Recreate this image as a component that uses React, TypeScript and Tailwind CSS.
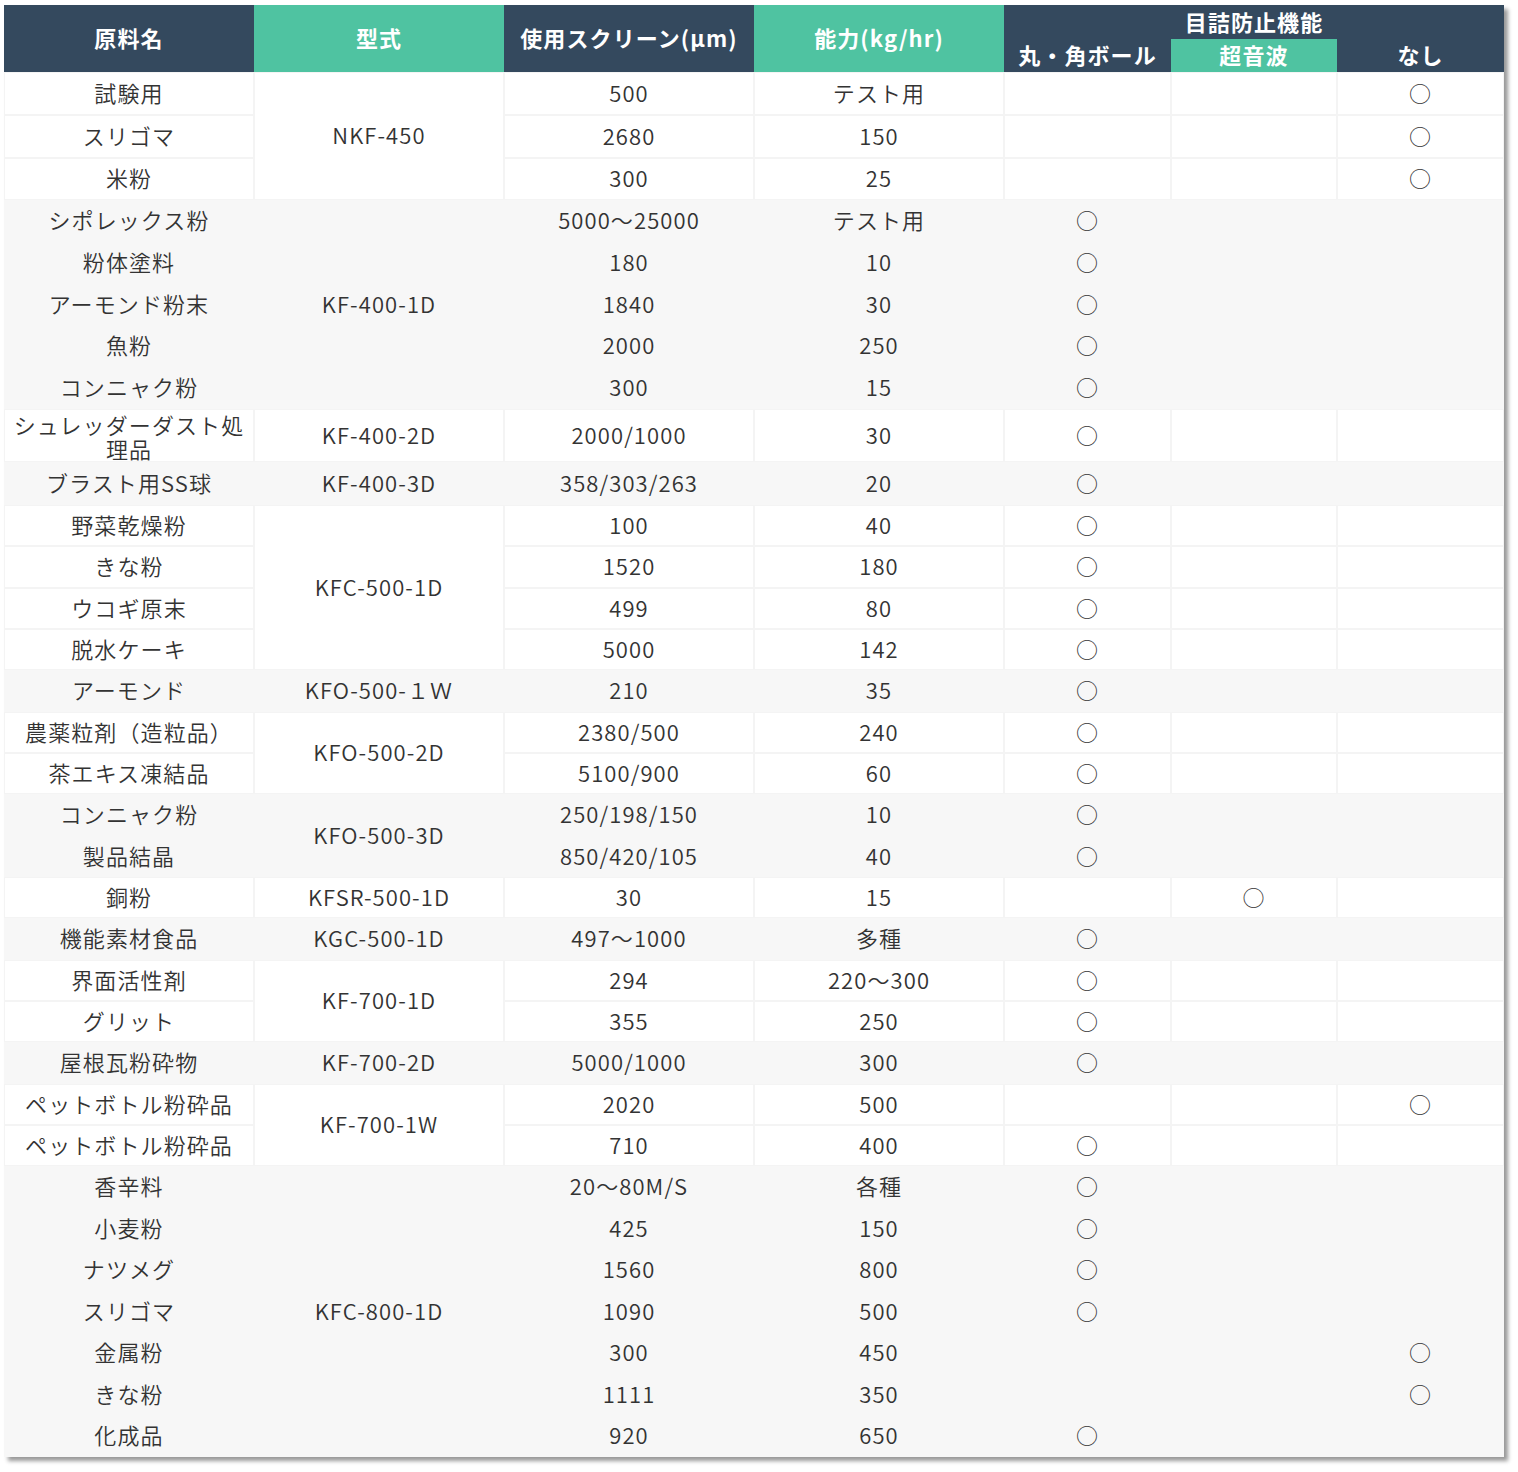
import React from "react";

// 目詰防止機能: 1 = 丸・角ボール, 2 = 超音波, 3 = なし
type Row = { name: string; screen: string; cap: string; mark: 1 | 2 | 3; h: number };
type Group = { model: string; grey: boolean; rows: Row[] };

const groups: Group[] = [
  {
    model: "NKF-450",
    grey: false,
    rows: [
      { name: "試験用", screen: "500", cap: "テスト用", mark: 3, h: 43 },
      { name: "スリゴマ", screen: "2680", cap: "150", mark: 3, h: 43 },
      { name: "米粉", screen: "300", cap: "25", mark: 3, h: 42 },
    ],
  },
  {
    model: "KF-400-1D",
    grey: true,
    rows: [
      { name: "シポレックス粉", screen: "5000～25000", cap: "テスト用", mark: 1, h: 42 },
      { name: "粉体塗料", screen: "180", cap: "10", mark: 1, h: 42 },
      { name: "アーモンド粉末", screen: "1840", cap: "30", mark: 1, h: 41 },
      { name: "魚粉", screen: "2000", cap: "250", mark: 1, h: 42 },
      { name: "コンニャク粉", screen: "300", cap: "15", mark: 1, h: 42 },
    ],
  },
  {
    model: "KF-400-2D",
    grey: false,
    rows: [{ name: "シュレッダーダスト処理品", screen: "2000/1000", cap: "30", mark: 1, h: 53 }],
  },
  {
    model: "KF-400-3D",
    grey: true,
    rows: [{ name: "ブラスト用SS球", screen: "358/303/263", cap: "20", mark: 1, h: 43 }],
  },
  {
    model: "KFC-500-1D",
    grey: false,
    rows: [
      { name: "野菜乾燥粉", screen: "100", cap: "40", mark: 1, h: 41 },
      { name: "きな粉", screen: "1520", cap: "180", mark: 1, h: 42 },
      { name: "ウコギ原末", screen: "499", cap: "80", mark: 1, h: 41 },
      { name: "脱水ケーキ", screen: "5000", cap: "142", mark: 1, h: 41 },
    ],
  },
  {
    model: "KFO-500-１Ｗ",
    grey: true,
    rows: [{ name: "アーモンド", screen: "210", cap: "35", mark: 1, h: 42 }],
  },
  {
    model: "KFO-500-2D",
    grey: false,
    rows: [
      { name: "農薬粒剤（造粒品）", screen: "2380/500", cap: "240", mark: 1, h: 41 },
      { name: "茶エキス凍結品", screen: "5100/900", cap: "60", mark: 1, h: 41 },
    ],
  },
  {
    model: "KFO-500-3D",
    grey: true,
    rows: [
      { name: "コンニャク粉", screen: "250/198/150", cap: "10", mark: 1, h: 42 },
      { name: "製品結晶", screen: "850/420/105", cap: "40", mark: 1, h: 41 },
    ],
  },
  {
    model: "KFSR-500-1D",
    grey: false,
    rows: [{ name: "銅粉", screen: "30", cap: "15", mark: 2, h: 41 }],
  },
  {
    model: "KGC-500-1D",
    grey: true,
    rows: [{ name: "機能素材食品", screen: "497～1000", cap: "多種", mark: 1, h: 42 }],
  },
  {
    model: "KF-700-1D",
    grey: false,
    rows: [
      { name: "界面活性剤", screen: "294", cap: "220～300", mark: 1, h: 41 },
      { name: "グリット", screen: "355", cap: "250", mark: 1, h: 41 },
    ],
  },
  {
    model: "KF-700-2D",
    grey: true,
    rows: [{ name: "屋根瓦粉砕物", screen: "5000/1000", cap: "300", mark: 1, h: 42 }],
  },
  {
    model: "KF-700-1W",
    grey: false,
    rows: [
      { name: "ペットボトル粉砕品", screen: "2020", cap: "500", mark: 3, h: 41 },
      { name: "ペットボトル粉砕品", screen: "710", cap: "400", mark: 1, h: 41 },
    ],
  },
  {
    model: "KFC-800-1D",
    grey: true,
    rows: [
      { name: "香辛料", screen: "20～80M/S", cap: "各種", mark: 1, h: 42 },
      { name: "小麦粉", screen: "425", cap: "150", mark: 1, h: 41 },
      { name: "ナツメグ", screen: "1560", cap: "800", mark: 1, h: 42 },
      { name: "スリゴマ", screen: "1090", cap: "500", mark: 1, h: 41 },
      { name: "金属粉", screen: "300", cap: "450", mark: 3, h: 42 },
      { name: "きな粉", screen: "1111", cap: "350", mark: 3, h: 41 },
      { name: "化成品", screen: "920", cap: "650", mark: 1, h: 42 },
    ],
  },
];

const heights: Record<number, string> = {
  41: "h-[41px]",
  42: "h-[42px]",
  43: "h-[43px]",
  53: "h-[53px]",
};

const spans: Record<number, string> = {
  1: "row-span-1",
  2: "row-span-2",
  3: "row-span-3",
  4: "row-span-4",
  5: "row-span-5",
  7: "row-span-7",
};

const cols = "grid grid-cols-[250px_250px_250px_250px_167px_166px_167px]";

const Cell = ({
  grey,
  tight,
  className,
  children,
}: {
  grey: boolean;
  tight?: boolean;
  className?: string;
  children?: React.ReactNode;
}) => (
  <div
    className={`flex items-center justify-center overflow-hidden border px-2 text-center ${
      tight ? "leading-[24px]" : "pb-[3px]"
    } ${grey ? "border-[#f7f7f7] bg-[#f7f7f7]" : "border-[#f4f4f4] bg-white"} ${className ?? ""}`}
  >
    {children}
  </div>
);

const App: React.FC = () => {
  return (
    <div className="min-h-screen bg-white pl-[4px] pt-[5px] font-['Noto_Sans_CJK_JP','Noto_Sans',sans-serif] text-[22px] tracking-[0.05em] text-[#333]">
      <div className="w-[1500px] shadow-[4px_4px_4px_rgba(0,0,0,0.4)]">
        {/* header */}
        <div className={`${cols} grid-rows-[34px_33px] font-bold text-white`}>
          <div className="row-span-2 flex items-center justify-center bg-[#34495e] pb-[2px]">原料名</div>
          <div className="row-span-2 flex items-center justify-center bg-[#4fc3a1] pb-[2px]">型式</div>
          <div className="row-span-2 flex items-center justify-center bg-[#34495e] pb-[2px]">使用スクリーン(μm)</div>
          <div className="row-span-2 flex items-center justify-center bg-[#4fc3a1] pb-[2px]">能力(kg/hr)</div>
          <div className="col-span-3 flex items-center justify-center bg-[#34495e] pb-[2px]">目詰防止機能</div>
          <div className="flex items-center justify-center bg-[#34495e] pb-[3px]">丸・角ボール</div>
          <div className="flex items-center justify-center bg-[#4fc3a1] pb-[3px]">超音波</div>
          <div className="flex items-center justify-center bg-[#34495e] pb-[3px]">なし</div>
        </div>

        {/* body */}
        <div className={`${cols} font-[350]`}>
          {groups.map((g, gi) =>
            g.rows.map((r, ri) => {
              const h = heights[r.h];
              return (
                <React.Fragment key={`${gi}-${ri}`}>
                  <Cell grey={g.grey} tight={r.h > 50} className={h}>
                    {r.name}
                  </Cell>
                  {ri === 0 && (
                    <Cell grey={g.grey} className={spans[g.rows.length]}>
                      {g.model}
                    </Cell>
                  )}
                  <Cell grey={g.grey} className={h}>
                    {r.screen}
                  </Cell>
                  <Cell grey={g.grey} className={h}>
                    {r.cap}
                  </Cell>
                  <Cell grey={g.grey} className={h}>
                    {r.mark === 1 ? "○" : ""}
                  </Cell>
                  <Cell grey={g.grey} className={h}>
                    {r.mark === 2 ? "○" : ""}
                  </Cell>
                  <Cell grey={g.grey} className={h}>
                    {r.mark === 3 ? "○" : ""}
                  </Cell>
                </React.Fragment>
              );
            })
          )}
        </div>
      </div>
    </div>
  );
};

export default App;
